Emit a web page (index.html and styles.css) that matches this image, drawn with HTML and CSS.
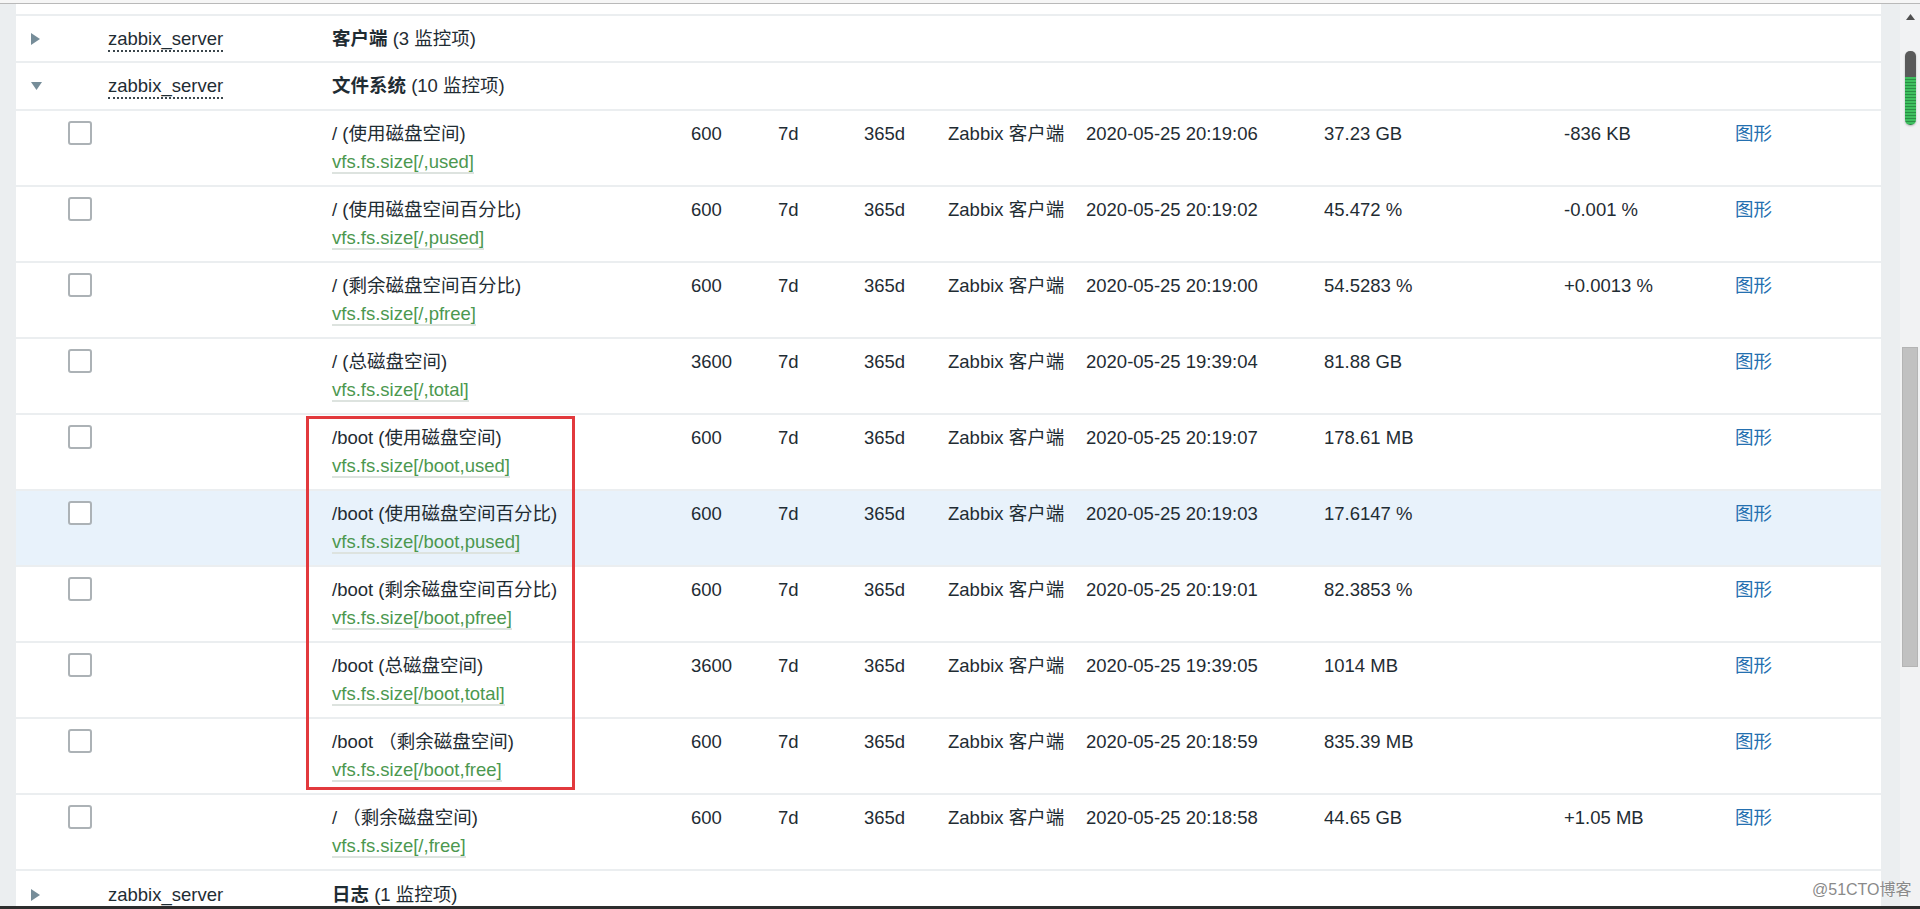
FILE: index.html
```html
<!DOCTYPE html>
<html lang="zh-CN">
<head>
<meta charset="utf-8">
<title>Latest data</title>
<link rel="stylesheet" href="styles.css">
</head>
<body>
<div class="topline"></div>
<div class="frame">
  <div class="strip-left"></div>
  <div class="content">
    <div class="row partial"></div>

    <div class="row group g1">
      <div class="c-tog"><svg class="tri-r" width="9" height="12" viewBox="0 0 9 12"><path d="M0 0 L9 6 L0 12 Z"/></svg></div>
      <div class="c-host"><span class="host">zabbix_server</span></div>
      <div class="c-gname"><b>客户端</b> (3 监控项)</div>
    </div>

    <div class="row group g2">
      <div class="c-tog"><svg class="tri-d" width="11" height="8" viewBox="0 0 11 8"><path d="M0 0 L11 0 L5.5 8 Z"/></svg></div>
      <div class="c-host"><span class="host">zabbix_server</span></div>
      <div class="c-gname"><b>文件系统</b> (10 监控项)</div>
    </div>

    <div class="row item">
      <div class="c-chk"><span class="chk"></span></div><div></div>
      <div class="c-name"><div>/ (使用磁盘空间)</div><div><span class="key">vfs.fs.size[/,used]</span></div></div>
      <div>600</div><div>7d</div><div>365d</div><div>Zabbix 客户端</div><div>2020-05-25 20:19:06</div><div>37.23 GB</div><div>-836 KB</div><div><span class="lnk">图形</span></div>
    </div>

    <div class="row item">
      <div class="c-chk"><span class="chk"></span></div><div></div>
      <div class="c-name"><div>/ (使用磁盘空间百分比)</div><div><span class="key">vfs.fs.size[/,pused]</span></div></div>
      <div>600</div><div>7d</div><div>365d</div><div>Zabbix 客户端</div><div>2020-05-25 20:19:02</div><div>45.472 %</div><div>-0.001 %</div><div><span class="lnk">图形</span></div>
    </div>

    <div class="row item">
      <div class="c-chk"><span class="chk"></span></div><div></div>
      <div class="c-name"><div>/ (剩余磁盘空间百分比)</div><div><span class="key">vfs.fs.size[/,pfree]</span></div></div>
      <div>600</div><div>7d</div><div>365d</div><div>Zabbix 客户端</div><div>2020-05-25 20:19:00</div><div>54.5283 %</div><div>+0.0013 %</div><div><span class="lnk">图形</span></div>
    </div>

    <div class="row item">
      <div class="c-chk"><span class="chk"></span></div><div></div>
      <div class="c-name"><div>/ (总磁盘空间)</div><div><span class="key">vfs.fs.size[/,total]</span></div></div>
      <div>3600</div><div>7d</div><div>365d</div><div>Zabbix 客户端</div><div>2020-05-25 19:39:04</div><div>81.88 GB</div><div></div><div><span class="lnk">图形</span></div>
    </div>

    <div class="row item">
      <div class="c-chk"><span class="chk"></span></div><div></div>
      <div class="c-name"><div>/boot (使用磁盘空间)</div><div><span class="key">vfs.fs.size[/boot,used]</span></div></div>
      <div>600</div><div>7d</div><div>365d</div><div>Zabbix 客户端</div><div>2020-05-25 20:19:07</div><div>178.61 MB</div><div></div><div><span class="lnk">图形</span></div>
    </div>

    <div class="row item hover">
      <div class="c-chk"><span class="chk"></span></div><div></div>
      <div class="c-name"><div>/boot (使用磁盘空间百分比)</div><div><span class="key">vfs.fs.size[/boot,pused]</span></div></div>
      <div>600</div><div>7d</div><div>365d</div><div>Zabbix 客户端</div><div>2020-05-25 20:19:03</div><div>17.6147 %</div><div></div><div><span class="lnk">图形</span></div>
    </div>

    <div class="row item">
      <div class="c-chk"><span class="chk"></span></div><div></div>
      <div class="c-name"><div>/boot (剩余磁盘空间百分比)</div><div><span class="key">vfs.fs.size[/boot,pfree]</span></div></div>
      <div>600</div><div>7d</div><div>365d</div><div>Zabbix 客户端</div><div>2020-05-25 20:19:01</div><div>82.3853 %</div><div></div><div><span class="lnk">图形</span></div>
    </div>

    <div class="row item">
      <div class="c-chk"><span class="chk"></span></div><div></div>
      <div class="c-name"><div>/boot (总磁盘空间)</div><div><span class="key">vfs.fs.size[/boot,total]</span></div></div>
      <div>3600</div><div>7d</div><div>365d</div><div>Zabbix 客户端</div><div>2020-05-25 19:39:05</div><div>1014 MB</div><div></div><div><span class="lnk">图形</span></div>
    </div>

    <div class="row item">
      <div class="c-chk"><span class="chk"></span></div><div></div>
      <div class="c-name"><div>/boot （剩余磁盘空间)</div><div><span class="key">vfs.fs.size[/boot,free]</span></div></div>
      <div>600</div><div>7d</div><div>365d</div><div>Zabbix 客户端</div><div>2020-05-25 20:18:59</div><div>835.39 MB</div><div></div><div><span class="lnk">图形</span></div>
    </div>

    <div class="row item">
      <div class="c-chk"><span class="chk"></span></div><div></div>
      <div class="c-name"><div>/ （剩余磁盘空间)</div><div><span class="key">vfs.fs.size[/,free]</span></div></div>
      <div>600</div><div>7d</div><div>365d</div><div>Zabbix 客户端</div><div>2020-05-25 20:18:58</div><div>44.65 GB</div><div>+1.05 MB</div><div><span class="lnk">图形</span></div>
    </div>

    <div class="row group g3">
      <div class="c-tog"><svg class="tri-r" width="9" height="12" viewBox="0 0 9 12"><path d="M0 0 L9 6 L0 12 Z"/></svg></div>
      <div class="c-host"><span class="host">zabbix_server</span></div>
      <div class="c-gname"><b>日志</b> (1 监控项)</div>
    </div>
  </div>
  <div class="strip-right"></div>
  <div class="scrollbar">
    <svg class="sb-arrow" width="9" height="6" viewBox="0 0 9 6"><path d="M0 6 L4.5 0 L9 6 Z"/></svg>
    <div class="sb-mini"><div class="sb-mini-top"></div><div class="sb-mini-green"></div></div>
    <div class="sb-thumb"></div>
  </div>
</div>
<div class="bottombar"></div>
<div class="redbox"></div>
<div class="watermark">@51CTO博客</div>
</body>
</html>
```

FILE: styles.css
```css
html, body {
  margin: 0;
  padding: 0;
  width: 1920px;
  height: 909px;
  overflow: hidden;
  background: #ffffff;
  font-family: "Liberation Sans", Arial, "Noto Sans CJK SC", sans-serif;
  font-size: 18.5px;
  color: #1f2c33;
}

.topline {
  height: 3px;
  background: #f6f6f6;
  border-bottom: 1px solid #b9b9b9;
}

.frame {
  display: flex;
  height: 902px;
  overflow: hidden;
}

.strip-left {
  width: 16px;
  flex: none;
  background: #ebeef0;
}

.content {
  width: 1865px;
  flex: none;
  overflow: hidden;
}

.strip-right {
  width: 19px;
  flex: none;
  background: #ebeef0;
}

.scrollbar {
  width: 20px;
  flex: none;
  background: #f1f2f3;
  display: flex;
  flex-direction: column;
  align-items: center;
}

.sb-arrow {
  fill: #505050;
  margin-top: 10px;
}

.sb-mini {
  margin-top: 31px;
  width: 11px;
  height: 74px;
  border-radius: 5px;
  overflow: hidden;
  display: flex;
  flex-direction: column;
  box-shadow: 0 1px 2px rgba(0,0,0,0.25);
}

.sb-mini-top {
  height: 26px;
  background: #5a5a5a;
}

.sb-mini-green {
  flex: 1;
  background: repeating-linear-gradient(to bottom, #3fbf5f 0, #3fbf5f 2px, #2a8f45 2px, #2a8f45 3px);
}

.sb-thumb {
  margin-top: 222px;
  width: 16px;
  height: 320px;
  background: #c1c1c1;
  border: 1px solid #b4b4b4;
  box-sizing: border-box;
}

.row {
  display: grid;
  grid-template-columns: 92px 224px 359px 87px 86px 84px 138px 238px 240px 171px 146px;
  border-bottom: 2px solid #ebeef0;
  box-sizing: border-box;
  white-space: nowrap;
}

.partial {
  height: 12px;
}

.group {
  align-items: center;
  line-height: 22px;
}

.g1 { height: 47px; }
.g2 { height: 48px; }
.g3 { height: 48px; border-bottom: none; }

.c-tog {
  padding-left: 15px;
  display: flex;
  align-items: center;
}

.tri-r, .tri-d {
  fill: #768d99;
}

.c-gname {
  grid-column: 3 / -1;
}

.c-gname b {
  font-weight: bold;
}

.host {
  border-bottom: 2px dotted #3b464c;
  padding-bottom: 1px;
}

.item {
  height: 76px;
  padding-top: 9px;
  line-height: 28px;
  align-items: start;
}

.item.hover {
  background: #e8f2fb;
}

.c-chk {
  padding-left: 52px;
  padding-top: 1px;
}

.chk {
  display: block;
  width: 24px;
  height: 24px;
  box-sizing: border-box;
  border: 2px solid #acb2b6;
  border-radius: 3px;
  background: #ffffff;
}

.key {
  color: #4c984f;
  border-bottom: 2px solid #dde3df;
}

.lnk {
  color: #2470b0;
}

.bottombar {
  height: 3px;
  background: #2d2d2d;
}

.redbox {
  position: absolute;
  left: 306px;
  top: 416px;
  width: 269px;
  height: 374px;
  box-sizing: border-box;
  border: 3px solid #e2393d;
}

.watermark {
  position: absolute;
  left: 1812px;
  top: 880px;
  white-space: nowrap;
  font-size: 16px;
  line-height: 20px;
  color: #8a8a8a;
  text-shadow: 0 0 2px #ffffff;
  font-family: "Liberation Sans", Arial, "Noto Sans CJK SC", sans-serif;
}
```
